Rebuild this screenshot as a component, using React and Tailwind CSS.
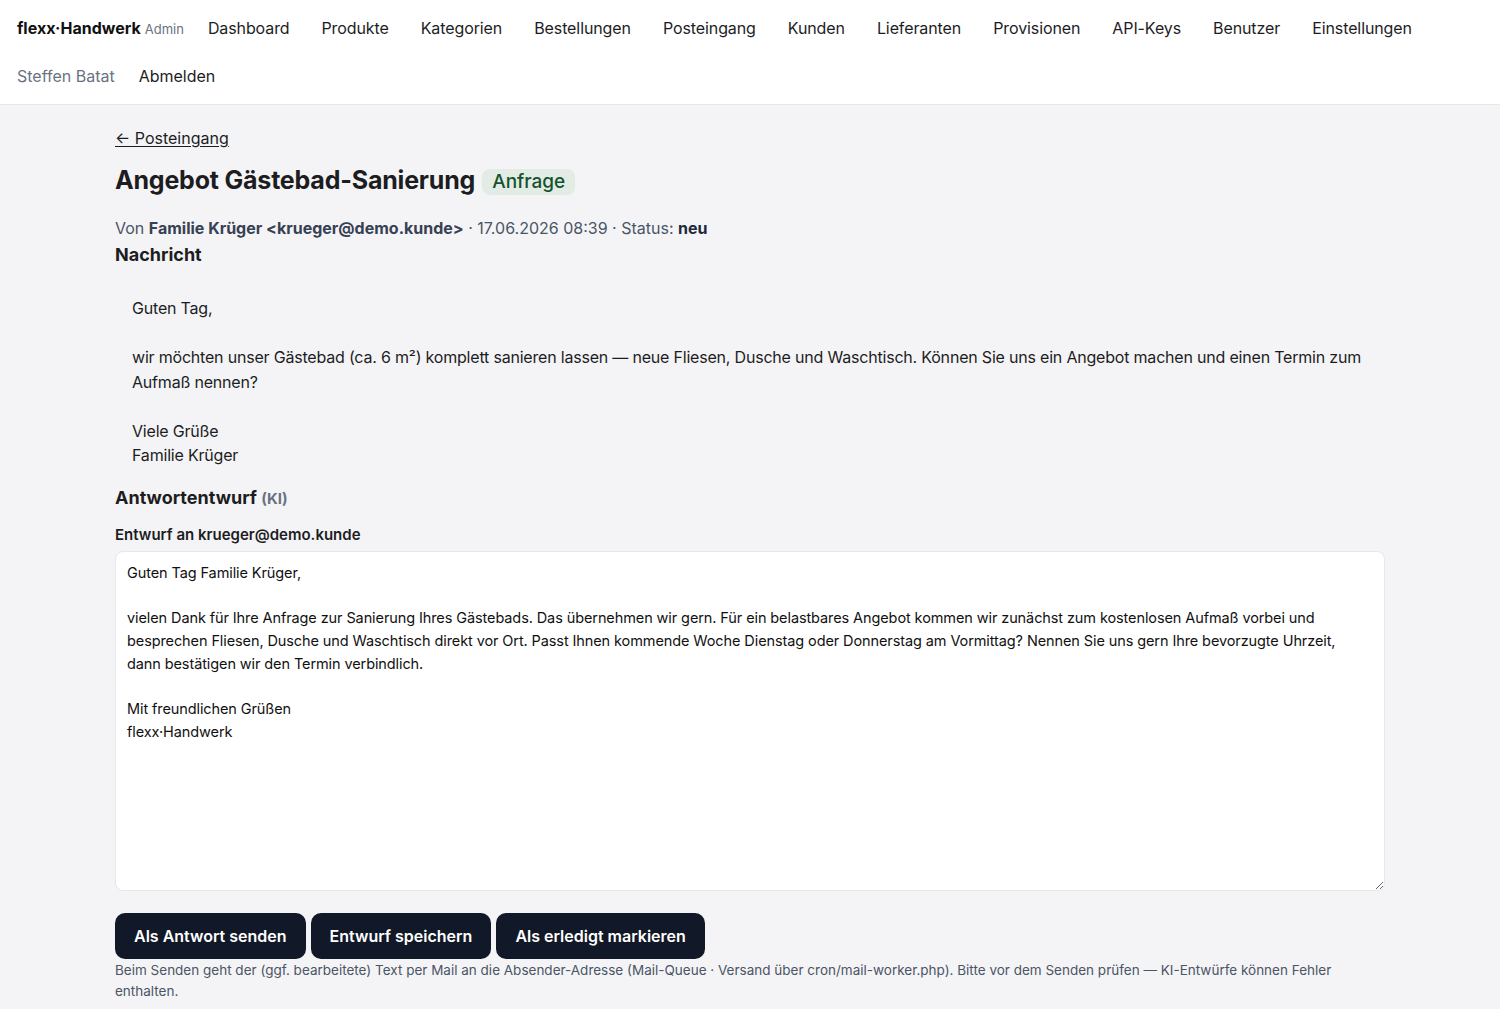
const navLinks = [
  'Dashboard',
  'Produkte',
  'Kategorien',
  'Bestellungen',
  'Posteingang',
  'Kunden',
  'Lieferanten',
  'Provisionen',
  'API-Keys',
  'Benutzer',
  'Einstellungen',
]

const message = `Guten Tag,

wir möchten unser Gästebad (ca. 6 m²) komplett sanieren lassen — neue Fliesen, Dusche und Waschtisch. Können Sie uns ein Angebot machen und einen Termin zum Aufmaß nennen?

Viele Grüße
Familie Krüger`

const draft = `Guten Tag Familie Krüger,

vielen Dank für Ihre Anfrage zur Sanierung Ihres Gästebads. Das übernehmen wir gern. Für ein belastbares Angebot kommen wir zunächst zum kostenlosen Aufmaß vorbei und besprechen Fliesen, Dusche und Waschtisch direkt vor Ort. Passt Ihnen kommende Woche Dienstag oder Donnerstag am Vormittag? Nennen Sie uns gern Ihre bevorzugte Uhrzeit, dann bestätigen wir den Termin verbindlich.

Mit freundlichen Grüßen
flexx·Handwerk`

const btn = 'h-[46px] px-[19px] rounded-[10px] bg-[#111827] text-white text-[16px] font-semibold'

function Header() {
  return (
    <header className="bg-white border-b border-gray-200 px-[17px] py-4 flex flex-col gap-6">
      <div className="flex items-center h-6">
        <a className="flex items-baseline gap-1 mr-6">
          <span className="font-bold text-[16px] text-[#111]">flexx·Handwerk</span>
          <span className="text-[13px] text-gray-500">Admin</span>
        </a>
        <nav className="flex items-center gap-8">
          {navLinks.map(l => (
            <a key={l} className="text-[16px] text-[#1d1d1f] tracking-[-0.1px]">{l}</a>
          ))}
        </nav>
      </div>
      <div className="flex items-center gap-6 h-6">
        <span className="text-[16px] text-gray-500">Steffen Batat</span>
        <a className="text-[16px] text-[#1d1d1f]">Abmelden</a>
      </div>
    </header>
  )
}

export default function App() {
  return (
    <div className="min-h-screen bg-[#f4f4f6] text-[#1d1d1f] font-['Inter','Helvetica_Neue',sans-serif]">
      <Header />
      <main className="max-w-[1270px] mx-auto pt-[21px] pb-4">
        <a className="text-[16px] leading-6 underline underline-offset-2">← Posteingang</a>

        <div className="flex items-center gap-[7px] mt-[14px]">
          <h1 className="text-[25px] font-bold leading-8 tracking-[-0.2px]">Angebot Gästebad-Sanierung</h1>
          <span className="bg-[#e3ebe5] text-[#14532d] text-[19px] font-medium px-[10px] h-[26px] leading-[26px] rounded-lg mt-1">Anfrage</span>
        </div>

        <p className="mt-[20px] text-[16px] leading-6 text-gray-600">
          Von <b className="text-gray-700">Familie Krüger &lt;krueger@demo.kunde&gt;</b> · 17.06.2026 08:39 · Status: <b className="text-gray-800">neu</b>
        </p>
        <h2 className="text-[18px] font-bold leading-6 mt-[3px]">Nachricht</h2>

        <div className="whitespace-pre-wrap text-[16px] leading-[24.5px] tracking-[-0.2px] px-[17px] pt-[29px] pb-[18px]">{message}</div>

        <h2 className="text-[18px] font-bold leading-6">
          Antwortentwurf <span className="text-[15px] text-gray-500">(KI)</span>
        </h2>

        <label className="block mt-[12px] text-[15px] font-semibold leading-6">Entwurf an krueger@demo.kunde</label>
        <textarea
          className="block mt-[4px] w-full h-[340px] bg-white border border-gray-200 rounded-lg px-[11px] py-[10px] text-[14.5px] leading-[22.8px] tracking-[-0.1px] text-[#111] resize-y outline-none"
          defaultValue={draft}
        />

        <div className="flex gap-[5px] mt-[22px]">
          <button className={btn}>Als Antwort senden</button>
          <button className={btn}>Entwurf speichern</button>
          <button className={btn}>Als erledigt markieren</button>
        </div>
        <p className="text-[13.5px] leading-[21px] text-gray-600 mt-[1px]">
          Beim Senden geht der (ggf. bearbeitete) Text per Mail an die Absender-Adresse (Mail-Queue · Versand über cron/mail-worker.php). Bitte vor dem Senden prüfen — KI-Entwürfe können Fehler enthalten.
        </p>
      </main>
    </div>
  )
}
